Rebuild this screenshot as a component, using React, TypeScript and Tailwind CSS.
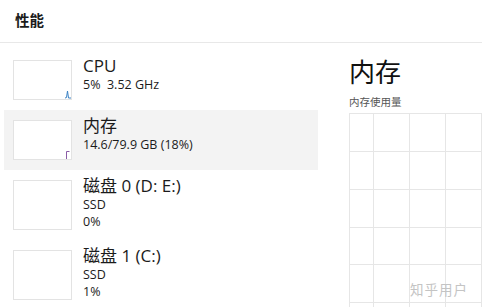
import React from "react";

const font = { fontFamily: '"Open Sans", "Noto Sans CJK SC", sans-serif' };

type Item = {
  title: string;
  lines: string[];
  h: string;
  active?: boolean;
  mark?: React.ReactNode;
};

const items: Item[] = [
  {
    title: "CPU",
    lines: ["5%  3.52 GHz"],
    h: "h-[40px]",
    mark: (
      <svg className="absolute right-0 bottom-0" width="6" height="10" viewBox="0 0 6 10">
        <path d="M0 9 L1.5 8.5 L2.5 2 L3.5 9 L6 9" fill="none" stroke="#3b82c4" strokeWidth="1" />
      </svg>
    ),
  },
  {
    title: "内存",
    lines: ["14.6/79.9 GB (18%)"],
    h: "h-[40px]",
    active: true,
    mark: (
      <svg className="absolute right-0 bottom-0" width="6" height="9" viewBox="0 0 6 9">
        <path d="M1.5 9 L1.5 1.5 L4.5 1.5" fill="none" stroke="#8a5ca6" strokeWidth="1" />
      </svg>
    ),
  },
  { title: "磁盘 0 (D: E:)", lines: ["SSD", "0%"], h: "h-[50px]" },
  { title: "磁盘 1 (C:)", lines: ["SSD", "1%"], h: "h-[50px]" },
];

function Row({ item }: { item: Item }) {
  return (
    <div
      className={`ml-[4px] mr-[2px] flex items-start gap-[11px] pl-[9px] pt-[10px] ${
        item.lines.length > 1 ? "h-[70px]" : "h-[60px]"
      } ${item.active ? "bg-[#f3f3f3]" : ""}`}
    >
      <div className={`relative w-[59px] ${item.h} border border-[#e3e3e3] bg-white shrink-0`}>
        {item.mark}
      </div>
      <div className="-mt-[5px] flex flex-col">
        <div className="text-[17px] leading-[22px] text-[#1b1b1b]">{item.title}</div>
        {item.lines.map((l) => (
          <div key={l} className="-mt-[1px] mb-[1px] text-[12.5px] leading-[17px] text-[#1b1b1b] whitespace-pre">
            {l}
          </div>
        ))}
      </div>
    </div>
  );
}

export default function App() {
  return (
    <div className="w-[482px] h-[307px] overflow-hidden bg-white" style={font}>
      <div className="h-[43px] border-b border-[#e8e8e8] pl-[15px] pt-[8px]">
        <span className="text-[14.5px] font-semibold text-[#1b1b1b]">性能</span>
      </div>
      <div className="flex">
        <div className="w-[320px] pt-[7px] shrink-0">
          {items.map((it) => (
            <Row key={it.title} item={it} />
          ))}
        </div>
        <div className="relative flex-1 pl-[29px] pt-[12px]">
          <div className="text-[26px] leading-[34px] text-[#111]">内存</div>
          <div className="mt-[6px] text-[10.5px] leading-[14px] text-[#555]">内存使用量</div>
          <svg className="mt-[4px] block" width="140" height="200" viewBox="0 0 140 200">
            <g stroke="#e6e6e6" strokeWidth="1" fill="none">
              <line x1="0.5" y1="0" x2="0.5" y2="200" />
              <line x1="0" y1="0.5" x2="140" y2="0.5" />
              <line x1="24.5" y1="0" x2="24.5" y2="200" />
              <line x1="60.5" y1="0" x2="60.5" y2="200" />
              <line x1="96.5" y1="0" x2="96.5" y2="200" />
              <line x1="132.5" y1="0" x2="132.5" y2="200" />
              <line x1="0" y1="38.5" x2="140" y2="38.5" />
              <line x1="0" y1="76.5" x2="140" y2="76.5" />
              <line x1="0" y1="114.5" x2="140" y2="114.5" />
              <line x1="0" y1="151.5" x2="140" y2="151.5" />
              <line x1="0" y1="189.5" x2="140" y2="189.5" />
            </g>
          </svg>
          <div className="absolute left-[90px] top-[237px] text-[13.5px] tracking-[1px] text-[#c4c4c4]">
            知乎用户
          </div>
        </div>
      </div>
    </div>
  );
}
